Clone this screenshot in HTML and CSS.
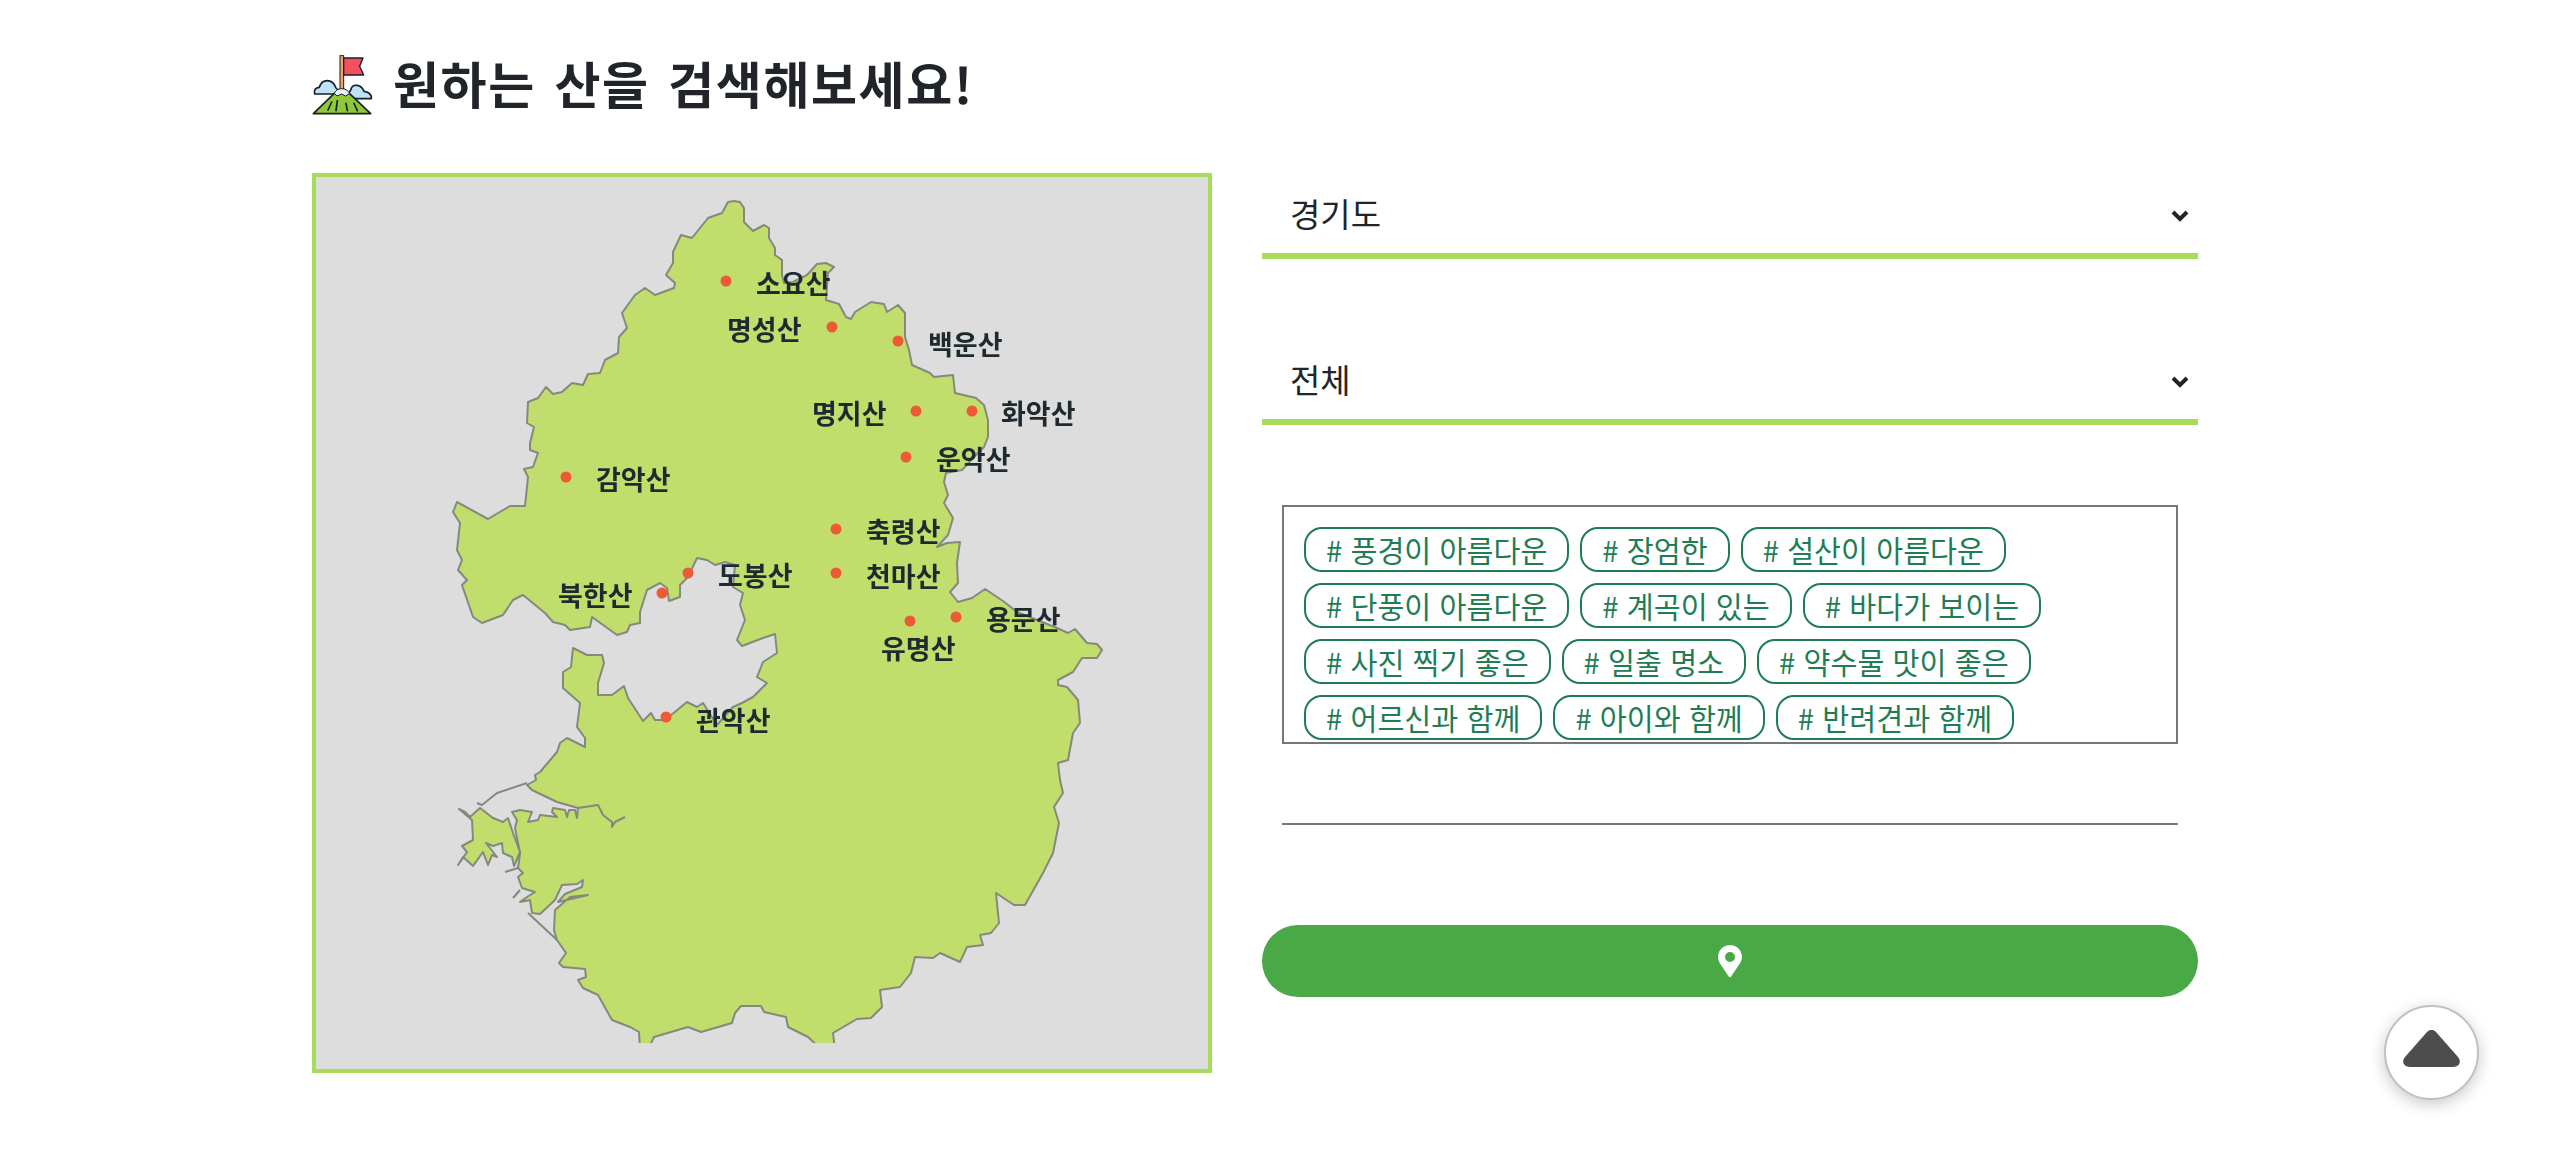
FILE: index.html
```html
<!DOCTYPE html>
<html lang="ko">
<head>
<meta charset="utf-8">
<title>원하는 산을 검색해보세요!</title>
<link rel="stylesheet" href="styles.css">
</head>
<body>
<div class="page">
  <h1 class="title">
    <svg class="title-icon" viewBox="36 42 192 192" aria-hidden="true">
      <path class="cloud" d="M44 162 q-4 -18 14 -20 q6 -20 24 -20 q18 0 26 22 l20 18z"/>
      <path class="cloud" d="M136 176 l16 -26 q4 -16 20 -14 q14 2 20 18 q24 4 22 22z"/>
      <rect class="pole" x="120" y="47" width="11" height="105"/>
      <path class="flag" d="M131 54 h58 l-10 25 l12 26 h-60z"/>
      <path class="mount" d="M40 221 L103 160 H148 L212 221z"/>
      <path class="snow" d="M103 160 q6 -14 22 -14 q16 0 24 14 l-12 8 l-12 -6 l-14 6z"/>
      <path class="ridge" d="M95 186 L84 210 M112 182 L108 212 M138 190 L142 212 M162 190 L172 212"/>
    </svg>
    <span>원하는 산을 검색해보세요!</span>
  </h1>
  <main class="content">
    <div class="map">
      <svg class="map-svg" viewBox="316 177 892 892" role="img" aria-label="경기도 지도">
        <defs><clipPath id="cut"><rect x="316" y="177" width="892" height="866"/></clipPath></defs>
        <g clip-path="url(#cut)">
          <polygon class="land" points="734,201 740,202 744,208 744,222 753,231 764,225 769,228 769,238 775,248 775,255 782,260 782,275 784,283 793,282 807,275 817,264 826,263 834,267 828,273 827,287 826,300 839,304 846,317 851,319 855,312 871,302 884,304 887,312 898,305 905,313 905,337 909,350 912,365 930,373 934,377 953,375 955,393 976,398 984,405 988,420 988,437 984,447 973,458 962,470 946,473 944,482 948,495 944,503 953,518 948,535 937,547 947,543 960,542 957,563 958,583 950,592 958,602 972,598 985,589 1003,601 1017,612 1057,628 1068,633 1075,629 1087,643 1097,644 1102,650 1097,658 1082,658 1073,672 1058,680 1058,685 1067,687 1078,700 1080,723 1073,733 1068,760 1058,763 1060,780 1063,793 1054,807 1059,823 1053,853 1043,873 1025,905 1014,905 996,893 999,923 991,933 980,935 983,945 967,947 960,962 940,953 933,958 915,957 911,973 900,987 880,990 882,1007 871,1018 857,1019 833,1033 835,1050 822,1050 808,1037 788,1027 786,1017 764,1012 761,1006 741,1006 735,1013 732,1023 701,1032 688,1027 654,1037 648,1050 640,1050 639,1032 630,1027 612,1020 598,995 583,988 578,980 586,977 585,969 563,967 559,963 566,953 557,940 554,930 555,910 570,897 588,895 558,902 565,894 582,887 583,880 577,884 562,885 555,900 540,914 532,913 530,900 520,902 527,897 535,892 522,888 518,877 523,873 518,868 520,853 515,828 517,820 512,812 520,810 532,812 528,822 538,820 540,815 557,817 552,812 553,808 565,810 567,817 569,810 575,810 577,818 578,808 557,802 532,790 527,785 536,780 535,775 540,772 557,752 560,743 567,738 585,747 585,738 577,727 580,703 563,688 563,672 571,667 573,648 587,655 602,655 604,663 598,683 598,695 612,695 624,686 628,698 643,721 651,713 655,720 665,720 687,702 697,707 703,703 717,725 733,707 742,703 753,697 767,683 757,677 763,662 777,653 775,634 763,638 742,646 737,640 745,620 740,605 743,593 733,587 735,565 725,562 715,565 707,560 697,558 688,577 680,585 680,597 669,601 667,588 660,583 647,590 640,612 640,623 630,625 627,632 617,635 592,617 590,627 570,630 565,625 553,622 545,613 523,595 513,600 503,615 482,623 473,617 462,585 467,580 458,570 462,560 457,550 460,523 453,512 457,502 488,519 510,506 525,506 528,477 524,469 533,467 538,453 530,450 530,443 534,427 527,423 528,402 538,398 546,387 553,394 562,392 572,383 583,385 588,374 600,373 605,360 618,353 619,337 627,328 622,313 635,295 645,288 655,295 674,288 675,283 666,275 673,263 673,252 681,235 692,238 708,218 722,213 728,202"/>
          <polygon class="land" points="459,809 465,812 470,817 480,808 493,818 503,822 508,818 513,833 520,852 514,866 512,857 503,853 502,843 493,846 486,843 497,857 492,855 488,865 483,852 473,866 463,857 458,865 467,852 462,846 473,840 472,820"/>
          <polyline class="coast" points="527,783 497,793 482,805 477,803"/>
          <polyline class="coast" points="528,913 557,940"/>
          <polyline class="coast" points="578,808 598,805 603,815 612,822 612,827 615,822 625,817"/>
          <polyline class="coast" points="505,872 518,868"/>
          <polyline class="coast" points="513,898 520,890"/>
        </g>
        <g class="dots">
          <circle cx="726" cy="281" r="5.5"/>
          <circle cx="832" cy="327" r="5.5"/>
          <circle cx="898" cy="341" r="5.5"/>
          <circle cx="916" cy="411" r="5.5"/>
          <circle cx="972" cy="411" r="5.5"/>
          <circle cx="906" cy="457" r="5.5"/>
          <circle cx="566" cy="477" r="5.5"/>
          <circle cx="836" cy="529" r="5.5"/>
          <circle cx="836" cy="573" r="5.5"/>
          <circle cx="688" cy="573" r="5.5"/>
          <circle cx="662" cy="593" r="5.5"/>
          <circle cx="910" cy="621" r="5.5"/>
          <circle cx="956" cy="617" r="5.5"/>
          <circle cx="666" cy="717" r="5.5"/>
        </g>
        <g class="labels">
          <text x="756" y="294">소요산</text>
          <text x="727" y="340">명성산</text>
          <text x="928" y="355">백운산</text>
          <text x="812" y="424">명지산</text>
          <text x="1001" y="424">화악산</text>
          <text x="936" y="470">운악산</text>
          <text x="596" y="490">감악산</text>
          <text x="866" y="542">축령산</text>
          <text x="866" y="587">천마산</text>
          <text x="718" y="586">도봉산</text>
          <text x="558" y="606">북한산</text>
          <text x="881" y="659">유명산</text>
          <text x="986" y="630">용문산</text>
          <text x="696" y="731">관악산</text>
        </g>
      </svg>
    </div>
    <form class="filters">
      <div class="picker-wrap">
        <select class="picker">
          <option>경기도</option>
        </select>
        <svg class="chevron" viewBox="0 0 18 13" aria-hidden="true"><path d="M2 3 L9 10 L16 3"/></svg>
      </div>
      <div class="picker-wrap picker-second">
        <select class="picker">
          <option>전체</option>
        </select>
        <svg class="chevron" viewBox="0 0 18 13" aria-hidden="true"><path d="M2 3 L9 10 L16 3"/></svg>
      </div>
      <div class="tag-box">
        <button type="button" class="tag"># 풍경이 아름다운</button>
        <button type="button" class="tag"># 장엄한</button>
        <button type="button" class="tag"># 설산이 아름다운</button>
        <button type="button" class="tag"># 단풍이 아름다운</button>
        <button type="button" class="tag"># 계곡이 있는</button>
        <button type="button" class="tag"># 바다가 보이는</button>
        <button type="button" class="tag"># 사진 찍기 좋은</button>
        <button type="button" class="tag"># 일출 명소</button>
        <button type="button" class="tag"># 약수물 맛이 좋은</button>
        <button type="button" class="tag"># 어르신과 함께</button>
        <button type="button" class="tag"># 아이와 함께</button>
        <button type="button" class="tag"># 반려견과 함께</button>
      </div>
      <div class="rule"></div>
      <button type="button" class="search" aria-label="검색">
        <svg class="pin" viewBox="0 0 384 512" aria-hidden="true"><path d="M172 502C27 291 0 253 0 192 0 86 86 0 192 0s192 86 192 192c0 61-27 99-172 310-10 13-30 13-40 0zm20-230a80 80 0 1 0 0-160 80 80 0 0 0 0 160z"/></svg>
      </button>
    </form>
  </main>
</div>
<button type="button" class="to-top" aria-label="맨 위로">
  <svg viewBox="0 0 57 37" aria-hidden="true"><path d="M24 2 L2 27 C-2 32 1 37 7 37 H50 C56 37 59 32 55 27 L33 2 C30 -1 27 -1 24 2z"/></svg>
</button>
</body>
</html>
```
FILE: styles.css
```css
* { box-sizing: border-box; }
html, body { margin: 0; padding: 0; background: #fff; }
body {
  font-family: "Noto Sans CJK KR", "Noto Sans", sans-serif;
  color: #212529;
}
.page { padding: 54px 0 0 312px; width: 2198px; }
.title {
  display: flex;
  align-items: center;
  gap: 17px;
  height: 64px;
  margin: 0 0 55px;
  font-size: 50px;
  font-weight: 700;
  letter-spacing: 1.6px;
  word-spacing: 3px;
  line-height: 56px;
  white-space: nowrap;
}
.title span { margin-bottom: 8px; }
.title-icon { width: 64px; height: 64px; flex: none; }
.cloud { fill: #bfe3f5; stroke: #15202b; stroke-width: 5; stroke-linejoin: round; }
.pole { fill: #f2a36b; stroke: #15202b; stroke-width: 3; }
.flag { fill: #f4505f; stroke: #15202b; stroke-width: 4; stroke-linejoin: round; }
.mount { fill: #8fc93a; stroke: #15202b; stroke-width: 5; stroke-linejoin: round; }
.snow { fill: #e9f5fb; stroke: #15202b; stroke-width: 3; stroke-linejoin: round; }
.ridge { fill: none; stroke: #15202b; stroke-width: 5; stroke-linecap: round; }
.content { display: flex; gap: 50px; align-items: flex-start; }
.map {
  width: 900px;
  height: 900px;
  flex: none;
  border: 4px solid #a5dc5b;
  background: #dddddd;
}
.map-svg { display: block; width: 892px; height: 892px; filter: blur(.4px); }
.land { fill: #c1dd6c; stroke: #85897d; stroke-width: 2; stroke-linejoin: round; }
.coast { fill: none; stroke: #85897d; stroke-width: 2; stroke-linejoin: round; }
.dots circle { fill: #ee5a35; }
.labels text {
  font-family: "Noto Sans CJK KR", sans-serif;
  font-size: 27px;
  font-weight: 700;
  fill: #1f2a30;
}
.filters { width: 936px; flex: none; display: flex; flex-direction: column; }
.picker-wrap { position: relative; height: 86px; }
.picker-second { margin-top: 80px; }
.picker {
  display: block;
  width: 100%;
  height: 86px;
  padding: 0 0 0 28px;
  border: 0;
  border-bottom: 6px solid #a5dc5b;
  border-radius: 0;
  background: #fff;
  color: #212529;
  font: 400 33px "Noto Sans CJK KR", sans-serif;
  outline: 0;
  appearance: none;
}
.chevron {
  position: absolute;
  top: 36px;
  right: 9px;
  width: 18px;
  height: 13px;
  pointer-events: none;
  fill: none;
  stroke: #212529;
  stroke-width: 4;
}
.tag-box {
  display: flex;
  flex-wrap: wrap;
  align-content: flex-start;
  gap: 11px 11px;
  width: 896px;
  height: 239px;
  margin: 80px 20px 0;
  padding: 20px 20px 2px;
  border: 2px solid #777;
  overflow: hidden;
}
.tag {
  height: 45px;
  padding: 0 20px 2px;
  border: 2px solid #1e7d55;
  border-radius: 18px;
  background: #fff;
  color: #1e7d55;
  font: 400 29.3px/38px "Noto Sans CJK KR", sans-serif;
  white-space: nowrap;
}
.rule { width: 896px; height: 2px; margin: 79px 0 0 20px; background: #777; }
.search {
  display: flex;
  align-items: center;
  justify-content: center;
  width: 936px;
  height: 72px;
  margin-top: 100px;
  padding: 0;
  border: 0;
  border-radius: 36px;
  background: #4aa947;
}
.pin { width: 24px; height: 32px; fill: #fff; }
.to-top {
  position: fixed;
  right: 81px;
  bottom: 60px;
  display: flex;
  align-items: center;
  justify-content: center;
  width: 95px;
  height: 95px;
  padding: 0 0 8px;
  border: 2px solid #c0c0c0;
  border-radius: 50%;
  background: #fff;
  box-shadow: 0 4px 16px rgba(0, 0, 0, .22);
}
.to-top svg { width: 57px; height: 37px; fill: #4d4d4d; }
```
